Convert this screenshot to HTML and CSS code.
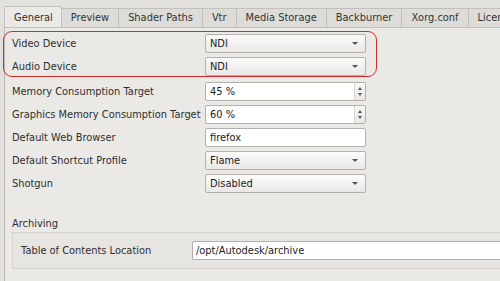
FILE: index.html
```html
<!DOCTYPE html>
<html>
<head>
<meta charset="utf-8">
<link rel="stylesheet" href="styles.css">
</head>
<body>
<div class="window">
  <div class="tabbar">
    <div class="tab active">General</div>
    <div class="tab">Preview</div>
    <div class="tab">Shader Paths</div>
    <div class="tab">Vtr</div>
    <div class="tab">Media Storage</div>
    <div class="tab">Backburner</div>
    <div class="tab">Xorg.conf</div>
    <div class="tab">Licensing</div>
  </div>
  <div class="panel">
    <div class="form">
      <div class="row">
        <div class="label">Video Device</div>
        <div class="combo"><span>NDI</span><i class="arrow"></i></div>
      </div>
      <div class="row">
        <div class="label">Audio Device</div>
        <div class="combo"><span>NDI</span><i class="arrow"></i></div>
      </div>
      <div class="row gap-top">
        <div class="label">Memory Consumption Target</div>
        <div class="spin"><span>45 %</span><div class="spinbtns"><i class="up"></i><i class="down"></i></div></div>
      </div>
      <div class="row">
        <div class="label">Graphics Memory Consumption Target</div>
        <div class="spin"><span>60 %</span><div class="spinbtns"><i class="up"></i><i class="down"></i></div></div>
      </div>
      <div class="row">
        <div class="label">Default Web Browser</div>
        <div class="text">firefox</div>
      </div>
      <div class="row">
        <div class="label">Default Shortcut Profile</div>
        <div class="combo"><span>Flame</span><i class="arrow"></i></div>
      </div>
      <div class="row">
        <div class="label">Shotgun</div>
        <div class="combo"><span>Disabled</span><i class="arrow"></i></div>
      </div>
    </div>
    <div class="group-title">Archiving</div>
    <div class="group">
      <div class="group-label">Table of Contents Location</div>
      <div class="text wide">/opt/Autodesk/archive</div>
    </div>
    <div class="highlight"></div>
  </div>
</div>
</body>
</html>
```

FILE: styles.css
```css
* { box-sizing: border-box; }
html, body {
  margin: 0;
  padding: 0;
  width: 500px;
  height: 281px;
  overflow: hidden;
  background: #e3e1dd;
  font-family: "DejaVu Sans", sans-serif;
  font-size: 9.85px;
  color: #2e2e2e;
}
.window {
  padding-left: 4px;
  height: 281px;
  display: flex;
  flex-direction: column;
  overflow: hidden;
}
.tabbar {
  display: flex;
  align-items: flex-end;
  height: 27px;
  padding-top: 5px;
  white-space: nowrap;
  overflow: hidden;
}
.tab {
  height: 19px;
  line-height: 18px;
  padding: 0 9px 0 9px;
  border: 1px solid #c3c0bb;
  border-left: none;
  border-bottom: none;
  background: #dedcd8;
  color: #333;
  flex: none;
}
.tab.active {
  height: 22px;
  line-height: 21px;
  padding: 0 8px 0 9px;
  background: #ebe9e6;
  border-left: 1px solid #c3c0bb;
  border-radius: 2px 2px 0 0;
  position: relative;
  top: 1px;
  z-index: 1;
}
.panel {
  position: relative;
  flex: 1;
  background: #ebe9e6;
  border-left: 1px solid #bcb9b4;
  border-top: 1px solid #c3c0bb;
}
.form {
  display: flex;
  flex-direction: column;
  gap: 4px;
  padding: 6px 0 0 7px;
}
.row {
  display: flex;
  align-items: center;
  height: 19px;
}
.row.gap-top { margin-top: 2px; }
.label {
  width: 193px;
  flex: none;
  white-space: nowrap;
}
.combo, .spin, .text {
  width: 161px;
  height: 19px;
  border: 1px solid #b4b1ac;
  border-radius: 2px;
  display: flex;
  align-items: center;
  padding-left: 4px;
  position: relative;
  color: #222;
}
.combo {
  background: linear-gradient(#fbfbfa, #e9e8e6);
  justify-content: space-between;
  padding-right: 7px;
}
.arrow {
  width: 0;
  height: 0;
  border-left: 3px solid transparent;
  border-right: 3px solid transparent;
  border-top: 3px solid #555;
}
.spin, .text {
  background: #fff;
  justify-content: space-between;
}
.spinbtns {
  width: 11px;
  height: 17px;
  border-left: 1px solid #d5d3cf;
  background: linear-gradient(#f8f8f7, #e8e7e5);
  display: flex;
  flex-direction: column;
  align-items: center;
  justify-content: center;
  gap: 3px;
}
.up {
  width: 0; height: 0;
  border-left: 2.5px solid transparent;
  border-right: 2.5px solid transparent;
  border-bottom: 3px solid #555;
}
.down {
  width: 0; height: 0;
  border-left: 2.5px solid transparent;
  border-right: 2.5px solid transparent;
  border-top: 3px solid #555;
}
.group-title {
  margin: 25px 0 0 7px;
  line-height: 12px;
}
.group {
  margin: 2px 0 0 7px;
  height: 37px;
  border: 1px solid #d6d3ce;
  border-right: none;
  background: #e7e5e1;
  display: flex;
  align-items: center;
  padding-left: 8px;
  white-space: nowrap;
}
.group-label {
  width: 171px;
  flex: none;
}
.text.wide {
  width: 320px;
  flex: none;
  border-right: none;
  border-radius: 2px 0 0 2px;
  padding-left: 3px;
}
.highlight {
  position: absolute;
  left: -2px;
  top: 3px;
  width: 374px;
  height: 46px;
  border: 1.5px solid #d52b2b;
  border-radius: 9px;
  pointer-events: none;
}
```
